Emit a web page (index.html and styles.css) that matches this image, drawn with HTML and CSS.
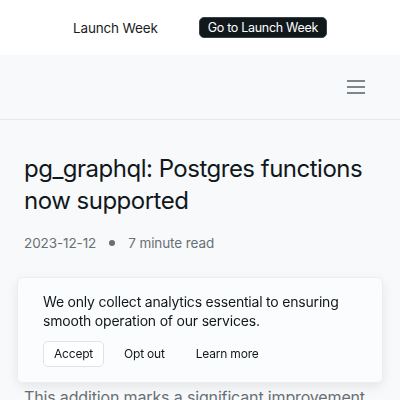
FILE: index.html
```html
<!DOCTYPE html>
<html>
<head>
<meta charset="utf-8">
<link rel="stylesheet" href="styles.css">
</head>
<body>
<div class="announce">
  <span class="announce-label">Launch Week</span>
  <a class="announce-btn">Go to Launch Week</a>
</div>
<nav class="nav">
  <svg class="burger" width="18" height="14" viewBox="0 0 18 14"><rect x="0" y="0" width="18" height="2" fill="#7e868c"/><rect x="0" y="6" width="18" height="2" fill="#7e868c"/><rect x="0" y="12" width="18" height="2" fill="#7e868c"/></svg>
</nav>
<main class="post">
  <h1 class="title">pg_graphql: Postgres functions now supported</h1>
  <div class="meta"><span>2023-12-12</span><span class="dot"></span><span>7 minute read</span></div>
  <p class="body">This addition marks a significant improvement</p>
</main>
<div class="cookie">
  <p class="cookie-text">We only collect analytics essential to ensuring smooth operation of our services.</p>
  <div class="cookie-actions">
    <button class="cbtn cbtn-outline">Accept</button>
    <button class="cbtn">Opt out</button>
    <button class="cbtn">Learn more</button>
  </div>
</div>
</body>
</html>
```
FILE: styles.css
```css
* { box-sizing: border-box; }
html, body { margin: 0; padding: 0; }
body {
  background: #f8f9fa;
  font-family: Inter, "Noto Sans", sans-serif;
  color: #11181c;
  overflow: hidden;
  height: 400px;
}
.announce {
  height: 55px;
  background: #ffffff;
  display: flex;
  align-items: center;
  justify-content: center;
  gap: 41px;
  font-size: 13.5px;
  letter-spacing: -0.15px;
}
.announce-label { color: #1a1d1f; }
.announce-btn {
  background: #11181c;
  color: #ffffff;
  border: 1px solid #3a4145;
  border-radius: 5px;
  padding: 2px 8px;
  font-size: 12.5px;
  letter-spacing: -0.3px;
  line-height: 15px;
}
.nav {
  height: 65px;
  border-bottom: 1px solid #e6e8eb;
  display: flex;
  align-items: center;
  justify-content: flex-end;
  padding-right: 35px;
}
.burger { display: block; margin-top: -1px; }
.post { padding: 33px 24px 0; }
.title {
  margin: 0;
  font-size: 24px;
  line-height: 32px;
  font-weight: 400;
  letter-spacing: -0.5px;
  color: #11181c;
}
.meta {
  margin-top: 16px;
  display: flex;
  align-items: center;
  gap: 13px;
  font-size: 13.5px;
  line-height: 20px;
  color: #687076;
  letter-spacing: -0.1px;
}
.dot { width: 6px; height: 6px; border-radius: 50%; background: #687076; }
.body {
  margin: 0;
  margin-top: 131px;
  font-size: 16px;
  line-height: 26px;
  color: #687076;
  letter-spacing: -0.15px;
  white-space: nowrap;
}
.cookie {
  position: fixed;
  left: 17px;
  right: 17px;
  bottom: 17px;
  height: 106px;
  background: #fbfcfd;
  border: 1px solid #eceef0;
  border-radius: 6px;
  box-shadow: 0 4px 12px rgba(0,0,0,0.08);
  padding: 14px 25px 0;
}
.cookie-text {
  margin: 0;
  font-size: 14px;
  line-height: 19px;
  letter-spacing: -0.2px;
  color: #11181c;
}
.cookie-actions {
  margin-top: 11px;
  display: flex;
  align-items: center;
  gap: 0;
}
.cbtn {
  font-family: inherit;
  font-size: 12px;
  letter-spacing: -0.2px;
  line-height: 16px;
  background: transparent;
  border: 1px solid transparent;
  border-radius: 5px;
  padding: 4px 10px;
  color: #11181c;
  margin-right: 9px;
}
.cbtn-outline { border-color: #dfe3e6; background: #ffffff; }
```
